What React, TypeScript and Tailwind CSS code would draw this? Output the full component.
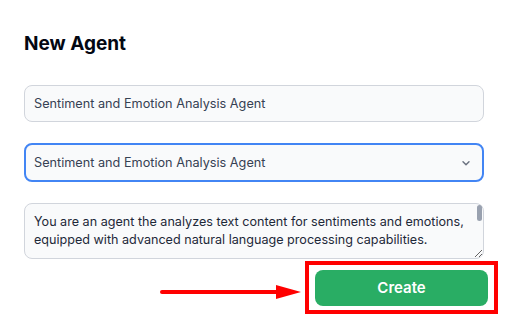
import React from "react";

const App: React.FC = () => {
  const prompt =
    "You are an agent the analyzes text content for sentiments and emotions, equipped with advanced natural language processing capabilities.";

  return (
    <div className="w-[508px] h-[322px] bg-white overflow-hidden font-['Inter',sans-serif]">
      <div className="pl-[24px] pr-[24px] pt-[30px]">
        <h1 className="text-[19px] leading-[28px] font-bold text-gray-950">New Agent</h1>

        {/* Name */}
        <input
          defaultValue="Sentiment and Emotion Analysis Agent"
          className="mt-[27px] block w-full h-[37px] rounded-lg border border-gray-300 bg-gray-50 px-[9px] text-[12.7px] text-gray-700 outline-none"
        />

        {/* Template select */}
        <div className="relative mt-[21px]">
          <select
            defaultValue="sentiment"
            className="block w-full h-[39px] appearance-none rounded-lg border-2 border-[#4285f4] bg-gray-50 pl-[8px] pr-8 text-[12.7px] text-gray-700 outline-none"
          >
            <option value="sentiment">Sentiment and Emotion Analysis Agent</option>
          </select>
          <svg
            className="pointer-events-none absolute right-[12px] top-1/2 -translate-y-1/2"
            width="12"
            height="12"
            viewBox="0 0 20 20"
            fill="none"
          >
            <path d="M5 8l5 5 5-5" stroke="#6b7280" strokeWidth="2.4" strokeLinecap="round" strokeLinejoin="round" />
          </svg>
        </div>

        {/* Instructions */}
        <div className="relative mt-[21px]">
          <textarea
            defaultValue={prompt}
            className="block w-full h-[56px] rounded-lg border border-gray-300 bg-gray-50 pl-[9px] pr-[6px] pt-[9px] text-[12.6px] leading-[18px] text-gray-800 outline-none resize-y overflow-hidden"
          />
          <div className="pointer-events-none absolute right-[2px] top-[2px] w-[5px] h-[16px] rounded-full bg-gray-400" />
        </div>
      </div>

      {/* Create button with callout */}
      <div className="mt-[2px] flex items-center justify-end pr-[10px]">
        <svg width="142" height="16" viewBox="0 0 142 16" className="mt-[9px] mr-[3px]">
          <line x1="2" y1="8" x2="120" y2="8" stroke="#ff0000" strokeWidth="4" strokeLinecap="round" />
          <polygon points="116,1 141,8 116,15" fill="#ff0000" />
        </svg>
        <div className="border-4 border-[#ff0000] px-[6px] pt-[5px] pb-[4px]">
          <button className="w-[173px] h-[36px] rounded-lg bg-[#29ad64] text-[15px] font-semibold text-white">
            Create
          </button>
        </div>
      </div>
    </div>
  );
};

export default App;
